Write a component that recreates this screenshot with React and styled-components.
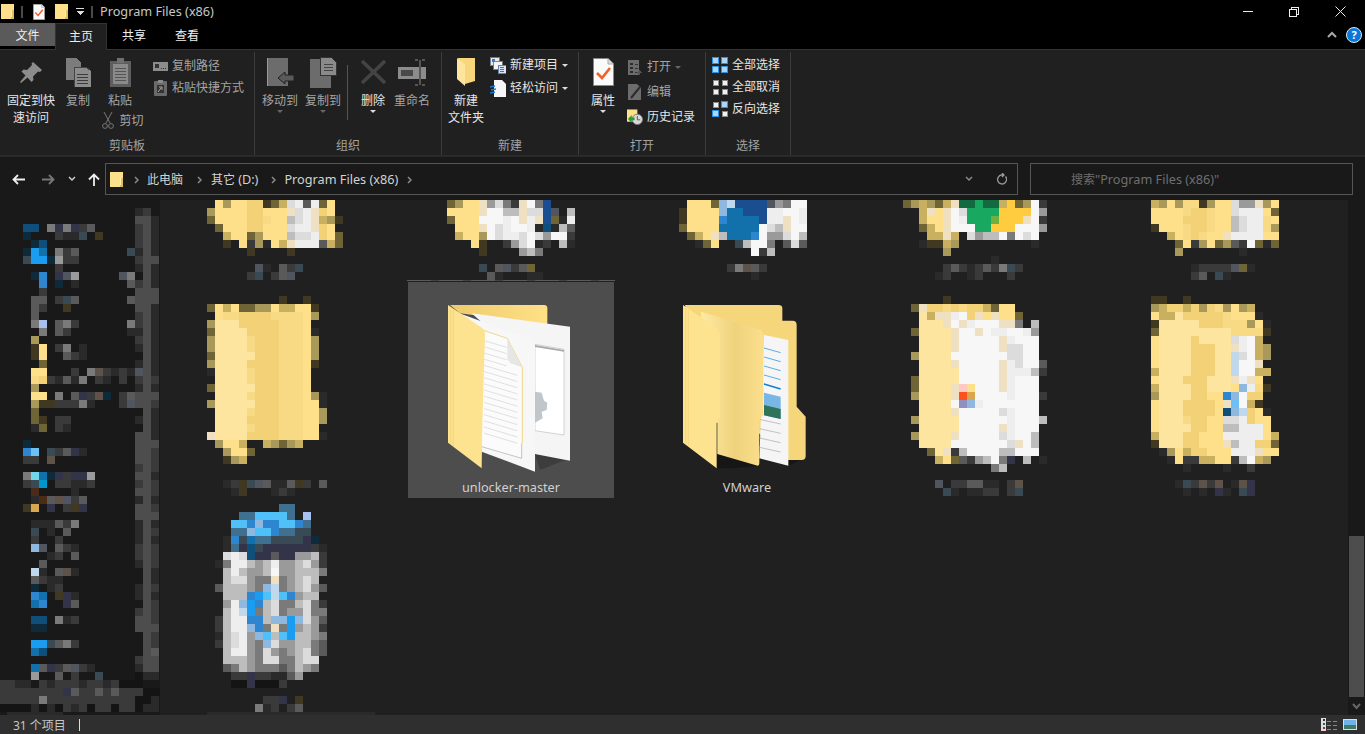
import styled, { createGlobalStyle } from "styled-components";

const GlobalStyle = createGlobalStyle`
    html, body{
        margin: 0;
        padding: 0;
        background: #000;
        overflow: hidden;
    }
    body{
        font-family: "Noto Sans", "Noto Sans CJK SC", sans-serif;
        font-size: 12px;
    }
`;

const Latin = styled.span`
    font-size: 12.7px;
`;

const Window = styled.div`
    width: 1365px;
    height: 734px;
    display: flex;
    flex-direction: column;
    overflow: hidden;
    background: #000;
    color: #ddd;
`;

/* title bar */
const TitleBar = styled.div`
    height: 23px;
    display: flex;
    align-items: center;
    flex-shrink: 0;
`;
const QuickSlot = styled.div`
    display: flex;
    align-items: center;
    margin-left: ${p => p.$left}px;
`;
const QuickSep = styled.div`
    width: 2px;
    height: 12px;
    background: #4a4a4a;
    margin-left: ${p => p.$left}px;
`;
const Title = styled.span`
    margin-left: 7px;
    color: #c8c8c8;
    line-height: 23px;
`;
const Controls = styled.div`
    margin-left: auto;
    padding-right: 2px;
    display: flex;
`;
const Control = styled.div`
    width: 46px;
    height: 22px;
    display: flex;
    align-items: center;
    justify-content: center;
`;

/* tabs */
const TabRow = styled.div`
    height: 26px;
    display: flex;
    flex-shrink: 0;
    position: relative;
    z-index: 1;
`;
const FileTab = styled.div`
    width: 55px;
    height: 23px;
    background: #5a5a5a;
    color: #eee;
    display: flex;
    align-items: center;
    justify-content: center;
`;
const Tab = styled.div`
    width: ${p => p.$w}px;
    height: ${p => p.$active ? 27 : 26}px;
    box-sizing: border-box;
    background: ${p => p.$active ? "#202020" : "transparent"};
    border: 1px solid ${p => p.$active ? "#333" : "transparent"};
    border-bottom: none;
    color: #eee;
    display: flex;
    align-items: center;
    justify-content: center;
    padding-bottom: 3px;
`;
const HelpArea = styled.div`
    margin-left: auto;
    padding: 0 3px 3px 0;
    display: flex;
    align-items: center;
    gap: 9px;
`;

/* ribbon */
const Ribbon = styled.div`
    height: 108px;
    box-sizing: border-box;
    flex-shrink: 0;
    background: #202020;
    border-top: 1px solid #333;
    border-bottom: 2px solid #2a2a2a;
    padding-top: 2px;
    display: flex;
`;
const Group = styled.div`
    width: ${p => p.$w}px;
    height: 103px;
    flex-shrink: 0;
    box-sizing: border-box;
    display: flex;
    flex-direction: column;
    border-right: 1px solid #3c3c3c;
`;
const GroupBody = styled.div`
    height: 85px;
    display: flex;
    padding-left: ${p => p.$pad || 0}px;
`;
const GroupLabel = styled.div`
    height: 18px;
    line-height: 18px;
    text-align: center;
    color: #a2a2a2;
`;
const LargeBtn = styled.div`
    width: ${p => p.$w}px;
    display: flex;
    flex-direction: column;
    align-items: center;
    flex-shrink: 0;
    color: ${p => p.$dim ? "#a4a4a4" : "#e6e6e6"};
    line-height: 17px;
    white-space: nowrap;
    text-align: center;
`;
const IconBox = styled.div`
    height: 40px;
    display: flex;
    align-items: center;
    justify-content: center;
`;
const Caret = styled.div`
    width: 0;
    height: 0;
    margin-top: 1px;
    border-left: 3px solid transparent;
    border-right: 3px solid transparent;
    border-top: 3px solid ${p => p.$dim ? "#666" : "#ddd"};
    margin-left: ${p => p.$left || 0}px;
`;
const CutRow = styled.div`
    display: flex;
    align-items: center;
    gap: 5px;
    margin-top: 3px;
    margin-left: 6px;
    color: #a8a8a8;
`;
const SmallCol = styled.div`
    display: flex;
    flex-direction: column;
    gap: ${p => p.$gap}px;
    padding-top: ${p => p.$top}px;
    margin-left: ${p => p.$left || 0}px;
`;
const SmallRow = styled.div`
    height: 18px;
    display: flex;
    align-items: center;
    gap: 4px;
    white-space: nowrap;
    color: ${p => p.$dim ? "#a4a4a4" : "#e6e6e6"};
    line-height: 18px;
`;
const SmallIcon = styled.div`
    width: 16px;
    height: 18px;
    display: flex;
    align-items: center;
    justify-content: center;
    flex-shrink: 0;
`;
const VSep = styled.div`
    width: 1px;
    height: 55px;
    margin: 13px 6px 0;
    background: #555;
    flex-shrink: 0;
`;

/* address bar */
const AddressRow = styled.div`
    height: 43px;
    flex-shrink: 0;
    background: #191919;
    display: flex;
    align-items: center;
    box-sizing: border-box;
    padding: 1px 12px 0 0;
`;
const NavBtns = styled.div`
    width: 105px;
    display: flex;
    align-items: center;
    flex-shrink: 0;
`;
const NavSlot = styled.div`
    margin-left: ${p => p.$left}px;
    display: flex;
`;
const AddressBox = styled.div`
    width: 913px;
    height: 32px;
    box-sizing: border-box;
    border: 1px solid #555;
    display: flex;
    align-items: center;
    padding-left: 4px;
    color: #d2d2d2;
`;
const Crumb = styled.span`
    margin-left: ${p => p.$left}px;
    white-space: nowrap;
`;
const BoxEnd = styled.div`
    margin-left: auto;
    display: flex;
    align-items: center;
    gap: 23px;
    padding-right: 10px;
`;
const SearchBox = styled.div`
    width: 323px;
    height: 32px;
    margin-left: 12px;
    box-sizing: border-box;
    border: 1px solid #555;
    padding-left: 40px;
    color: #6e6e6e;
    line-height: 30px;
`;

/* main */
const Main = styled.div`
    flex: 1;
    min-height: 0;
    display: flex;
    overflow: hidden;
`;
const NavPane = styled.div`
    width: 160px;
    flex-shrink: 0;
    background: #191919;
    overflow: hidden;
`;
const Content = styled.div`
    flex: 1;
    background: #202020;
    padding-left: 12px;
    display: grid;
    grid-template-columns: repeat(5, 206px);
    grid-template-rows: 82px 222px 1fr;
    column-gap: 30px;
    overflow: hidden;
`;
const Tile = styled.div`
    padding-top: ${p => p.$top || 0}px;
    min-width: 0;
`;
const SelectedTile = styled.div`
    height: 216px;
    box-sizing: border-box;
    background: ${p => p.$on ? "#4d4d4d" : "transparent"};
    padding-top: 23px;
    display: flex;
    flex-direction: column;
    position: relative;

    &::before{
        content: "";
        display: ${p => p.$on ? "block" : "none"};
        position: absolute;
        left: -1px;
        right: -1px;
        top: -2px;
        height: 1px;
        background: repeating-linear-gradient(90deg, #5a5a5a 0 24px, #444 24px 32px);
    }
`;
const FolderSlot = styled.div`
    height: 167px;
    margin-left: ${p => p.$left}px;
`;
const TileName = styled.div`
    margin-top: 7px;
    line-height: 16px;
    text-align: center;
    color: #d0d0d0;
`;
const ScrollBar = styled.div`
    width: 17px;
    flex-shrink: 0;
    background: #191919;
    box-sizing: border-box;
    padding: 336px 1px 0;
    display: flex;
    flex-direction: column;
    align-items: center;
`;
const ScrollThumb = styled.div`
    width: 15px;
    height: 161px;
    background: #4d4d4d;
`;
const ScrollDown = styled.div`
    margin-top: 6px;
    display: flex;
`;

/* status bar */
const StatusBar = styled.div`
    height: 19px;
    flex-shrink: 0;
    background: #2f2f2f;
    display: flex;
    align-items: center;
    padding-left: 13px;
    color: #c6c6c6;
`;
const StatusSep = styled.div`
    width: 1px;
    height: 12px;
    background: #ddd;
    margin-left: 13px;
`;
const ViewBtns = styled.div`
    margin-left: auto;
    padding-right: 8px;
    display: flex;
    align-items: center;
    gap: 6px;
`;

const MosaicSvg = styled.svg`
    display: block;
    margin-left: ${p => p.$x || 0}px;
    flex-shrink: 0;
`;

// colours of the pixelated (censored) blocks
const palette = {
    j: "#ffe08a", J: "#fde59f", w: "#f3d277", W: "#f9da84", k: "#a8985a", K: "#c8b060",
    l: "#6f6435", m: "#403820", n: "#4d4d4d", e: "#5a5a5a", f: "#3a3a3a", g: "#2a2a2a",
    h: "#7a7a7a", z: "#9a9a9a", y: "#bdbdbd", Y: "#dcdcdc", X: "#eeeeee", x: "#f7f7f7",
    T: "#eee0c0", A: "#1a4e90", a: "#0f4f7a", B: "#1270aa", b: "#1a9cf0", c: "#0f2a3a",
    d: "#2f86d0", D: "#6cc0f4", i: "#a8c0f0", q: "#70d8e8", r: "#0098c8", u: "#8fb8e0",
    v: "#c0d8ec", V: "#4fc0f8", N: "#3f7090", E: "#146a40", G: "#18a860", H: "#70b040",
    O: "#ffcc40", R: "#ff5020", S: "#ffc8c0", I: "#9090c0", s: "#4a2a18", t: "#d8a850",
    o: "#5f5248", p: "#3a4a55", P: "#505560", F: "#33334a", Q: "#141414",
};

function Mosaic({ rows, x }){
    const cols = Math.max(...rows.map(r => r.length));
    return (
        <MosaicSvg $x={x} width={cols * 8} height={rows.length * 8} shapeRendering="crispEdges">
            {rows.map((row, ry) => row.split("").map((ch, rx) => (
                palette[ch] ? <rect key={rx} x={rx * 8} y={ry * 8} width="8" height="8" fill={palette[ch]} /> : null
            )))}
        </MosaicSvg>
    );
}

const navRows = [
    "...", "..............gf.", "..............nng", "aa.hFhFfe.....fng", "c...fggp.m....fng",
    ".ca...........fng", "cbB.hfe......pgng", "pbbczff.......fnn", "....f.........gng",
    ".cd.FPz.....Ph.ng", "..d.c.g......efng", "..f...........nnn", ".ee.fpe......ennn",
    ".ef..m........nng", ".e............fng", ".hi.ehf......hfng", "..h.ef.......ggng",
    ".k............fng", ".mj.fh.g......gng", ".mj..efg.......ng", "..l...........gng",
    ".jj...f.hofgfgPng", ".Wwfgegh.fg.f.fnf", ".k............gng", ".jj.h.eFfoc.fennn",
    ".kmmfffhg...fPnnf", ".l.............ng", ".lm.ff........gng", ".gl.fg.........ng",
    "..............nng", "c.............nnn", "dD.pfeFg......nnf", "ff.o..........nnf",
    "..............fnf", "hqBcFfFFz.....nng", "fpr.ffggf.....fnf", ".s....g.......nnf",
    ".gseoPfe......gng", "mt.F.fmF......nnf", "..............nnn", ".gggefh.......gng",
    ".p.g.e........gnf", ".f..f.........gng", ".uP.efg.......fnf", "...gf.e.......fnf",
    "..e...........gnf", ".vg.eog........ng", ".efgg..........ng", ".c.gf.........gnf",
    ".dB.mFg.......gng", ".Bd..Fe........nf", "..............fnf", ".aa.hgf.......nnf",
    ".cc...........nnn", "...............nf", ".bbpehf........nf", ".Ba............ne",
    "..............fnn", ".BeFfePfg.....gnn", ".z..e.f..p....Qgg",
].map(r => "..." + r);
navRows.push(
    "ffgg.fgfffgffgfQQQ",
    "ffffffffFeffefefffQQQ",
    "fffffhfffffffffffQQg",
    "QQQQgQgQfgfQffQffQgg",
    ".ggggggg"
);

const folderA = [
    ".jkjjwwmlKYXeXlj.", "kjjjjwwjjjTYXTwj.", "ljjjjwwWjjyYXTKkm", ".ljjjwwjjjYXXTwj.",
    "..KjjlkjjjyYYXwjl", "..m.jfkgjKTXXXeKl", ".....m....m......", "", "......Pg.efp.....", ".....fp.feP......",
];
const folderB = [
    "lkjjTzYhfTxhA...", "jjjjTxxyyTYYAP.y", "ljjjxxxXxTXTAlgX", ".jjjTxYXxxXgagye",
    ".KjjkxYXXYxYzxxf", "...jm..fzYxgf.yg", "....m....zyh....", "", "....p.ePfel.....", ".....eg...gg....",
];
const folderC = [
    ".jjjluvAAAAPzhxx", "mjjjjuBBAAAXXxxX", "mjjjjdBBBBAXXTxX", "ljjjjBBBBBxYyTxx",
    ".lKjTyBBBdxzzYxy", "..glj..pyxxh.eYe", ".........xfy....", "", "......fhoef.....", ".........g......",
];
const folderD = [
    "lkKklKTEEGEEKOlkxf", "..KTjTxYGGGGOOOOxz", "..KjjTxXGGGHOOOTxf", "..lKjTxxxGGOOOxxxz",
    "...KKTK.YzyyxhxYx.", "..gmmKk.........g.", ".....k............", "...........g......",
    ".....fefgfefhpf...", "....gf..gf...f....",
];
const folderE = [
    "KkjkWWmkjjYzzTkj", "jjjjWwwWjjYXXXjl", "jjjjwwwWjjyYXXWj", "mjjjWwwWjjyYXXWk",
    "..KjWwWjjTXXXXjj", "...ljfkjlkefxlgl", "...k.......g....", "", ".....gffffPlg...", ".....fe.pg......",
];
const folderF = [
    ".........m..m", "ljKjllkkjKKjjm", ".jWWwwwwWWWWjk", "kJJJwwwwwWWWj", "lJJJJwwwwWWWjg",
    "kJJJJWwwwWWWjk", "kJJJJWwwwWWWjk", "lJJJJJwwwWWWjk", "kJJJJwwwwWWWjm", "gJJJJWwwwWWWj",
    ".JJJJWwwwWWWj", "lJJJJJwwwWWWj", ".JJJJWwwwWWWjkg", "kJJJJJwwwWWWjjg", ".JJJJWwwwWWWjjk",
    ".JJJJwwwwWWWjjk", ".JJJJWwwwWWWjj", "TJJJJwwwwWWWjjg", ".kjjK..KklkK", "..kjjl", "..mkK",
    "", "", "..gfmpPeggemf.e", "...gm...gfg",
];
const folderG = [
    "....m", "lTwwWwWwwKljj", ".JKTTXxwTjTjjl", ".JJJTxTXxxxTTh.y", "lJJJJTxxTxXXxxXz",
    ".JJJJTxxxxxTXxxx", ".JJJJTxxxxxTYYxx", "kJJJJxxxxxxxYYxx", ".JJJJTxxxxxTXYxxe",
    ".JJJJJxxxxxTXXXyf", "lJJJJJxxxxxTXxxx", "lJJJJTSjxxxTXxxx", "kJJJJTRtxxxxXxxxf",
    ".JJJJxIuXxxxxxxx", ".JJJJTxxxxxYXxxx", "kJJJJJxxxxxxXxxxy", ".JJJJJxxxxxTXxxx",
    "kJJJJTxxxxxYXxxy", ".JJJJxxxxxxxYTxy", "..lJTfyxxxxyyxxx", "...KjlefzyxhF.y.g",
    "..........hy", "", "...P.ffeegg.fo", "....pg.ggff.fp",
];
const folderH = [
    "mm..m", "kKwwKwkwWkjkK", "jKKJwwwwwWjjjg", "mJJJJJwwwWWWkjg", "lJJJJJJJJJWWWWm",
    "jJJJJwJJJJYXxK", "jJJJJwwwJJTXxKk", "jJJJJwwwJJvYxKk", "jJJJJwwwJJvxxT.", "KJJJJwwwJJvxxKK",
    "jJJJwwwJJJTXTj.", "KJJJJwwJJJjuXWm", "kJJJJwwjjduxww.", "jJJJwwwwjTDxKm.", "jJJJwwwwjauvwjg",
    "jJJJWwwjjYYXwjj", "jJJJJwwjjyyXXXj", "KJJJwwjjjXXXXXjK", "mJJJwwjjjTyXXwwl", ".gkjKwwjjjXXXTjj",
    "..gjffKKjjfyxKk", "....g....g..f", "", "...gpfofo.goF", "....g.g.Fg.pF",
];
const binRows = [
    ".........NN", "....NNVVVVN.i", "...VVduddVVdN", "...NNuVVdNNpp", "..gdpBNNppppFc",
    "..gNFapFFFFFFfg", "..YXYaFFeFFzzyf", ".ghXXyzyXzzyYzf", "..yXyzzyxzzyyyh", "..yYYzhhThzyYy",
    ".eyyyzhuvhzyYze", "..yyydbVvVdzyy", "..zXubdyYhhyYhf", "..yXvbhyYhzzYhh", ".fyXXddyuubuYze",
    ".fyXXudhThbzyzf", ".gyYXzuVyVbyyzh", ".fyYXzhuYzzyyhe", "..yXXzhYzhzyYhe", "..yyyzhYYhhyYY",
    "..ehyzhhhehyzh", "...ffFffggez", "...QQFQQQf", "", ".......ffF.m", "......hgf.fe", "ggggggggggggggggggggg",
];

/* icons */
function FolderIcon({ w = 13, h = 15 }){
    return (
        <svg width={w} height={h} viewBox="0 0 13 15" shapeRendering="crispEdges">
            <rect width="13" height="15" fill="#ffe08a" />
            <rect x="10" y="6" width="3" height="9" fill="#e2bd5f" />
            <rect x="10" y="6" width="1" height="7" fill="#fff0b8" />
        </svg>
    );
}
function PageCheck({ w = 12, h = 16 }){
    return (
        <svg width={w} height={h} viewBox="0 0 21 28">
            <path d="M.5.5H15L20.5 6V27.5H.5Z" fill="#fafafa" stroke="#888" />
            <path d="M15 .5V6H20.5" fill="#ddd" stroke="#aaa" />
            <path d="M4 15l5 5 8-10" fill="none" stroke="#f0602a" strokeWidth="2.6" />
        </svg>
    );
}
const QuickDown = () => (
    <svg width="8" height="8" viewBox="0 0 8 8" shapeRendering="crispEdges">
        <rect y="0" width="8" height="1" fill="#ddd" />
        <path d="M0 3h8L4 7Z" fill="#ddd" />
    </svg>
);
const Pin = () => (
    <svg width="22" height="21" viewBox="0 0 22 21">
        <path d="M13 0l9 8-2 2-2-.5-5 5 .5 3.5-2 2-4-4.5L1 21l-1-1 5.500-6.500L1.500 9.500l2-2 3.500.5 5-5L11.500 1.500Z" fill="#8c8c8c" />
    </svg>
);
const Copy = () => (
    <svg width="25" height="29" viewBox="0 0 25 29" shapeRendering="crispEdges">
        <path d="M0 0H10L15 5V22H0Z" fill="#7c7c7c" />
        <path d="M8 9H20L25 13V29H8Z" fill="#8c8c8c" stroke="#444" />
        <path d="M11 16H22M11 19H22M11 22H22M11 25H22" stroke="#3a3a3a" />
    </svg>
);
const Paste = () => (
    <svg width="21" height="29" viewBox="0 0 21 29" shapeRendering="crispEdges">
        <rect y="3" width="21" height="26" fill="#5e5e5e" />
        <rect x="3" y="6" width="15" height="20" fill="#8a8a8a" />
        <path d="M5 10H16M5 13H16M5 16H16M5 19H16M5 22H16" stroke="#555" />
        <rect x="7" y="0" width="7" height="5" fill="#707070" />
    </svg>
);
const Scissors = () => (
    <svg width="12" height="17" viewBox="0 0 12 17" fill="none" stroke="#777">
        <path d="M2 0l6 11M10 0L4 11" />
        <circle cx="3" cy="14" r="2.400" />
        <circle cx="9" cy="14" r="2.400" />
    </svg>
);
const PathIcon = () => (
    <svg width="15" height="9" viewBox="0 0 15 9" shapeRendering="crispEdges">
        <rect width="15" height="9" fill="#8c8c8c" />
        <path d="M2 2l1 4 1-4 1 4 1-4M8 6h1M10 6h1M12 6h1" stroke="#333" fill="none" />
    </svg>
);
const ShortcutIcon = () => (
    <svg width="13" height="16" viewBox="0 0 13 16">
        <rect y="1" width="13" height="15" rx="1" fill="#6a6a6a" />
        <rect x="4" width="5" height="3" fill="#8a8a8a" />
        <rect x="3" y="5" width="7" height="8" fill="#333" />
        <path d="M4 12l3-4M5 7h3v3" stroke="#aaa" fill="none" />
    </svg>
);
const MoveTo = () => (
    <svg width="27" height="29" viewBox="0 0 27 29" shapeRendering="crispEdges">
        <rect width="21" height="28" fill="#6c6c6c" />
        <rect width="1" height="28" fill="#999" />
        <path d="M11 20l7-6v3h9v6h-9v3Z" fill="#5a5a5a" stroke="#202020" shapeRendering="auto" />
    </svg>
);
const CopyTo = () => (
    <svg width="27" height="31" viewBox="0 0 27 31" shapeRendering="crispEdges">
        <rect y="2" width="21" height="29" fill="#6c6c6c" />
        <path d="M10 0H21L26 5V18H10Z" fill="#8a8a8a" stroke="#333" />
        <path d="M14 7H23M14 10H23M14 13H23" stroke="#444" />
    </svg>
);
const Delete = () => (
    <svg width="25" height="24" viewBox="0 0 25 24">
        <path d="M1 1l23 22M24 1L1 23" stroke="#444" strokeWidth="3.500" />
    </svg>
);
const Rename = () => (
    <svg width="29" height="27" viewBox="0 0 29 27" shapeRendering="crispEdges">
        <rect y="8" width="28" height="12" fill="#8c8c8c" />
        <rect x="3" y="11" width="12" height="6" fill="#4a4a4a" />
        <path d="M17 1h3M24 1h3M22 1V26M17 26h3M24 26h3" stroke="#555" strokeWidth="2" fill="none" />
    </svg>
);
const NewFolder = () => (
    <svg width="19" height="28" viewBox="0 0 19 28">
        <path d="M1 0H18V23L8 26Z" fill="#f8d77c" />
        <path d="M0 0L8 6V28L0 21Z" fill="#fde59f" />
    </svg>
);
const NewItem = () => (
    <svg width="17" height="17" viewBox="0 0 17 17" shapeRendering="crispEdges">
        <rect width="10" height="9" fill="#e8e8e8" stroke="#778" />
        <rect x="2" y="2" width="3" height="3" fill="#3a7bc8" />
        <rect x="4" y="4" width="9" height="9" fill="#f4f4f4" stroke="#778" />
        <rect x="9" y="8" width="8" height="9" fill="#d8e4f4" stroke="#5a7ab0" />
        <path d="M11 11h4M11 13h4M11 15h4" stroke="#3a6ab0" />
    </svg>
);
const EasyAccess = () => (
    <svg width="16" height="17" viewBox="0 0 16 17">
        <path d="M4 0H12L16 4V17H4Z" fill="#f6f6f6" />
        <path d="M0 7l5-1M1 10l5-1M0 13l5-1" stroke="#1878d8" strokeWidth="1.400" />
    </svg>
);
const OpenIcon = () => (
    <svg width="14" height="15" viewBox="0 0 14 15" shapeRendering="crispEdges">
        <rect width="11" height="15" fill="#6c6c6c" />
        <path d="M2 3h3v2H2ZM2 7h3v2H2ZM2 11h3v2H2Z" fill="#2c2c2c" />
        <path d="M7 4h3M7 8h3M7 12h3" stroke="#333" />
        <path d="M11 10l3 3h-2v2h-2v-2H8Z" fill="#555" />
    </svg>
);
const EditIcon = () => (
    <svg width="14" height="16" viewBox="0 0 14 16">
        <path d="M0 0H9L13 4V16H0Z" fill="#6c6c6c" />
        <path d="M3 14L12 3" stroke="#2c2c2c" strokeWidth="2" />
    </svg>
);
const HistoryIcon = () => (
    <svg width="17" height="16" viewBox="0 0 17 16">
        <rect width="11" height="13" fill="#ffe08a" />
        <circle cx="11" cy="10.500" r="5.500" fill="#d8d8d8" stroke="#777" />
        <path d="M11 7v4h3" stroke="#555" fill="none" />
        <path d="M1 10l4-4v2.500h3v3H5V14Z" fill="#2c9a2c" />
    </svg>
);
const SelectGrid = ({ pattern }) => (
    <svg width="16" height="16" viewBox="0 0 16 16" shapeRendering="crispEdges">
        {pattern.map((c, i) => {
            const px = i % 2 ? 9 : 0;
            const py = i > 1 ? 9 : 0;
            return c
                ? <g key={i}><rect x={px} y={py} width="7" height="7" fill="#2f8fe0" /><rect x={px + 1} y={py + 1} width="5" height="5" fill="#a9d6fb" /></g>
                : <g key={i}><rect x={px + 1} y={py + 1} width="6" height="6" fill="#8a8a8a" /><rect x={px + 2} y={py + 2} width="4" height="4" fill="#f2f2f2" /></g>;
        })}
    </svg>
);
const Chevron = ({ color = "#8a8a8a" }) => (
    <svg width="5" height="8" viewBox="0 0 5 8"><path d="M1 1l3 3-3 3" fill="none" stroke={color} strokeWidth="1.500" /></svg>
);
const ArrowLeft = ({ color }) => (
    <svg width="13" height="11" viewBox="0 0 13 11"><path d="M13 5.500H2M6 1L1.500 5.500 6 10" fill="none" stroke={color} strokeWidth="1.800" /></svg>
);
const ArrowRight = ({ color }) => (
    <svg width="13" height="11" viewBox="0 0 13 11"><path d="M0 5.500H11M7 1l4.500 4.500L7 10" fill="none" stroke={color} strokeWidth="1.800" /></svg>
);
const ArrowUp = () => (
    <svg width="12" height="13" viewBox="0 0 12 13"><path d="M6 13V2M1 6.500L6 1.500l5 5" fill="none" stroke="#eee" strokeWidth="1.800" /></svg>
);
const SmallDown = ({ color = "#ccc" }) => (
    <svg width="8" height="6" viewBox="0 0 8 6"><path d="M1 1l3 3 3-3" fill="none" stroke={color} strokeWidth="1.500" /></svg>
);
const Refresh = () => (
    <svg width="11" height="12" viewBox="0 0 11 12"><path d="M9.500 3.500A4.500 4.500 0 1 1 5.500 2H8M6 0l2 2-2 2" fill="none" stroke="#999" strokeWidth="1.300" /></svg>
);
const Help = () => (
    <svg width="16" height="16" viewBox="0 0 16 16">
        <circle cx="8" cy="8" r="7.500" fill="#0a78d8" stroke="#d8e8f8" />
        <text x="8" y="12" textAnchor="middle" fontSize="11" fontWeight="700" fill="#fff" fontFamily="Noto Sans">?</text>
    </svg>
);
const ListView = () => (
    <svg width="16" height="13" viewBox="0 0 16 13" shapeRendering="crispEdges">
        <rect width="5" height="13" fill="#ddd" />
        <rect x="1.500" y="1" width="2" height="2" fill="#333" />
        <rect x="1.500" y="5" width="2" height="2" fill="#357" />
        <rect x="1.500" y="9" width="2" height="2" fill="#b22" />
        <path d="M6 3h4M12 3h4M6 7h4M12 7h4M6 11h4M12 11h4" stroke="#888" />
    </svg>
);
const ThumbView = () => (
    <svg width="14" height="11" viewBox="0 0 14 11" shapeRendering="crispEdges">
        <rect width="14" height="11" fill="#ddd" />
        <rect x="1" y="1" width="12" height="9" fill="#6fb4e8" />
        <rect x="1" y="6" width="12" height="4" fill="#3f7a6a" />
    </svg>
);

// big open folder with documents (zoom coordinates as viewBox)
const UnlockerFolder = () => (
    <svg width="123" height="167" viewBox="141 105 369 501">
        <defs>
            <linearGradient id="ub" x1="0" x2="1" y1="0" y2="0">
                <stop offset="0" stopColor="#eecb6c" />
                <stop offset="1" stopColor="#ffe086" />
            </linearGradient>
        </defs>
        <path d="M405 552L510 572 560 545 420 600Z" fill="#000" opacity=".2" />
        <path d="M150 105H432Q442 105 442 115V165L180 130Z" fill="url(#ub)" />
        <path d="M215 130L510 170V572L405 552V300Z" fill="#f5f5f6" />
        <path d="M405 223L492 238V495L405 482Z" fill="#fff" stroke="#aaa" strokeWidth="1.500" />
        <path d="M405 225L492 240V245L405 231Z" fill="#aaa" />
        <path d="M405 365L425 368 432 392 442 398 440 420 425 425 428 445 405 458Z" fill="#c0c6ca" />
        <path d="M178 130L405 212V605L245 545Z" fill="#f7f7f8" />
        <path d="M235 178L322 205V270L365 292V565L245 528Z" fill="#fbfbfb" />
        <path d="M235 176L322 205 367 292V520" fill="none" stroke="#f3d888" strokeWidth="3" />
        <path d="M365 520V565L245 530" fill="none" stroke="#aaa" strokeWidth="2" />
        <path d="M322 205L365 292 332 280 322 268Z" fill="#e6e6e6" />
        <g stroke="#c4c4c4" strokeWidth="1.500">
            {Array.from({ length: 16 }, (_, i) => (
                <path key={i} d={`M252 ${212 + i * 18.500}L${i < 4 ? 320 : 352} ${(i < 4 ? 232 : 242) + i * 18.500}`} />
            ))}
        </g>
        <path d="M144 105L243 172Q255 180 255 195L247 458 245 595 144 518Z" fill="#fde28f" />
        <path d="M152 115V522M160 120V528" stroke="#f2cf75" strokeWidth="2" />
    </svg>
);

const VmwareFolder = () => (
    <svg width="123" height="164" viewBox="849 105 369 492">
        <defs>
            <linearGradient id="vm" x1="0" x2="1" y1="0" y2="0">
                <stop offset="0" stopColor="#fdeaa5" />
                <stop offset=".55" stopColor="#efd27c" />
                <stop offset="1" stopColor="#fbdf8c" />
            </linearGradient>
        </defs>
        <path d="M1165 570L1217 565 1260 545 1165 587ZM950 552L1075 588 1000 595 950 595Z" fill="#000" opacity=".3" />
        <path d="M855 105H1135Q1147 105 1147 115V152H1178Q1190 152 1190 165V410L1217 440V558Q1217 570 1205 570L1150 570 903 300Z" fill="#f6d67a" />
        <path d="M1092 195L1165 210V587L1078 565Z" fill="#f5f5f5" />
        <g stroke="#3aa0e0" strokeWidth="2.500">
            <path d="M1092 234L1142 248M1092 261L1142 275M1092 288L1142 302M1092 315L1142 329" />
        </g>
        <path d="M1092 342L1142 357" stroke="#0a80d8" strokeWidth="4" />
        <path d="M1092 368L1142 380V447L1092 436Z" fill="#78b6e6" />
        <path d="M1092 405L1142 417V447L1092 436Z" fill="#2f7358" />
        <g stroke="#a8a8a8" strokeWidth="2">
            <path d="M1078 448L1142 462M1078 476L1142 490M1078 504L1142 518M1078 532L1142 546" />
        </g>
        <path d="M903 125L1078 178Q1090 183 1090 197V435L1078 450V578Q1078 590 1068 586L952 552V460L903 300Z" fill="url(#vm)" />
        <path d="M849 105L948 172Q960 182 960 197V440L950 460V595L849 518Z" fill="#fde28f" />
        <path d="M857 115V522M865 120V528" stroke="#f2cf75" strokeWidth="2" />
    </svg>
);

export default function App(){
    return (
        <Window>
            <GlobalStyle />
            <TitleBar>
                <QuickSlot $left={1}><FolderIcon /></QuickSlot>
                <QuickSep $left={7} />
                <QuickSlot $left={10}><PageCheck /></QuickSlot>
                <QuickSlot $left={10}><FolderIcon /></QuickSlot>
                <QuickSlot $left={8}><QuickDown /></QuickSlot>
                <QuickSep $left={7} />
                <Title><Latin>Program Files (x86)</Latin></Title>
                <Controls>
                    <Control>
                        <svg width="10" height="1" shapeRendering="crispEdges"><rect width="10" height="1" fill="#eee" /></svg>
                    </Control>
                    <Control>
                        <svg width="10" height="10" viewBox="0 0 10 10" shapeRendering="crispEdges">
                            <path d="M2.500 2.500V.5H9.500V7.500H7.500M.5 2.500H7.500V9.500H.5Z" fill="none" stroke="#eee" />
                        </svg>
                    </Control>
                    <Control>
                        <svg width="11" height="11" viewBox="0 0 11 11"><path d="M.5.5l10 10M10.500.5l-10 10" stroke="#eee" /></svg>
                    </Control>
                </Controls>
            </TitleBar>

            <TabRow>
                <FileTab>文件</FileTab>
                <Tab $w={52} $active>主页</Tab>
                <Tab $w={54}>共享</Tab>
                <Tab $w={52}>查看</Tab>
                <HelpArea>
                    <svg width="10" height="7" viewBox="0 0 10 7"><path d="M1 6l4-4 4 4" fill="none" stroke="#aaa" strokeWidth="2" /></svg>
                    <Help />
                </HelpArea>
            </TabRow>

            <Ribbon>
                <Group $w={255}>
                    <GroupBody>
                        <LargeBtn $w={62}>
                            <IconBox><Pin /></IconBox>
                            固定到快<br />速访问
                        </LargeBtn>
                        <LargeBtn $w={32} $dim>
                            <IconBox><Copy /></IconBox>
                            复制
                        </LargeBtn>
                        <LargeBtn $w={52} $dim>
                            <IconBox><Paste /></IconBox>
                            粘贴
                            <CutRow><Scissors />剪切</CutRow>
                        </LargeBtn>
                        <SmallCol $top={5} $gap={4} $left={6}>
                            <SmallRow $dim><SmallIcon><PathIcon /></SmallIcon>复制路径</SmallRow>
                            <SmallRow $dim><SmallIcon><ShortcutIcon /></SmallIcon>粘贴快捷方式</SmallRow>
                        </SmallCol>
                    </GroupBody>
                    <GroupLabel>剪贴板</GroupLabel>
                </Group>
                <Group $w={187}>
                    <GroupBody>
                        <LargeBtn $w={50} $dim>
                            <IconBox><MoveTo /></IconBox>
                            移动到
                            <Caret $dim />
                        </LargeBtn>
                        <LargeBtn $w={36} $dim>
                            <IconBox><CopyTo /></IconBox>
                            复制到
                            <Caret $dim />
                        </LargeBtn>
                        <VSep />
                        <LargeBtn $w={38}>
                            <IconBox><Delete /></IconBox>
                            删除
                            <Caret />
                        </LargeBtn>
                        <LargeBtn $w={40} $dim>
                            <IconBox><Rename /></IconBox>
                            重命名
                        </LargeBtn>
                    </GroupBody>
                    <GroupLabel>组织</GroupLabel>
                </Group>
                <Group $w={137}>
                    <GroupBody>
                        <LargeBtn $w={48}>
                            <IconBox><NewFolder /></IconBox>
                            新建<br />文件夹
                        </LargeBtn>
                        <SmallCol $top={4} $gap={5}>
                            <SmallRow><SmallIcon><NewItem /></SmallIcon>新建项目<Caret /></SmallRow>
                            <SmallRow><SmallIcon><EasyAccess /></SmallIcon>轻松访问<Caret /></SmallRow>
                        </SmallCol>
                    </GroupBody>
                    <GroupLabel>新建</GroupLabel>
                </Group>
                <Group $w={127}>
                    <GroupBody>
                        <LargeBtn $w={48}>
                            <IconBox><PageCheck w={21} h={28} /></IconBox>
                            属性
                            <Caret />
                        </LargeBtn>
                        <SmallCol $top={6} $gap={7}>
                            <SmallRow $dim><SmallIcon><OpenIcon /></SmallIcon>打开<Caret $dim /></SmallRow>
                            <SmallRow $dim><SmallIcon><EditIcon /></SmallIcon>编辑</SmallRow>
                            <SmallRow><SmallIcon><HistoryIcon /></SmallIcon>历史记录</SmallRow>
                        </SmallCol>
                    </GroupBody>
                    <GroupLabel>打开</GroupLabel>
                </Group>
                <Group $w={85}>
                    <GroupBody $pad={6}>
                        <SmallCol $top={4} $gap={4}>
                            <SmallRow><SmallIcon><SelectGrid pattern={[1, 1, 1, 1]} /></SmallIcon>全部选择</SmallRow>
                            <SmallRow><SmallIcon><SelectGrid pattern={[0, 0, 0, 0]} /></SmallIcon>全部取消</SmallRow>
                            <SmallRow><SmallIcon><SelectGrid pattern={[0, 1, 1, 0]} /></SmallIcon>反向选择</SmallRow>
                        </SmallCol>
                    </GroupBody>
                    <GroupLabel>选择</GroupLabel>
                </Group>
            </Ribbon>

            <AddressRow>
                <NavBtns>
                    <NavSlot $left={12}><ArrowLeft color="#eee" /></NavSlot>
                    <NavSlot $left={17}><ArrowRight color="#777" /></NavSlot>
                    <NavSlot $left={13}><SmallDown /></NavSlot>
                    <NavSlot $left={12}><ArrowUp /></NavSlot>
                </NavBtns>
                <AddressBox>
                    <FolderIcon w={13} h={16} />
                    <Crumb $left={11}><Chevron /></Crumb>
                    <Crumb $left={8}>此电脑</Crumb>
                    <Crumb $left={14}><Chevron /></Crumb>
                    <Crumb $left={9}>其它 <Latin>(D:)</Latin></Crumb>
                    <Crumb $left={13}><Chevron /></Crumb>
                    <Crumb $left={8}><Latin>Program Files (x86)</Latin></Crumb>
                    <Crumb $left={9}><Chevron /></Crumb>
                    <BoxEnd>
                        <SmallDown color="#8a8a8a" />
                        <Refresh />
                    </BoxEnd>
                </AddressBox>
                <SearchBox>搜索<Latin>"Program Files (x86)"</Latin></SearchBox>
            </AddressRow>

            <Main>
                <NavPane>
                    <Mosaic rows={navRows} x={-1} />
                </NavPane>
                <Content>
                    <Tile><Mosaic rows={folderA} x={35} /></Tile>
                    <Tile><Mosaic rows={folderB} x={39} /></Tile>
                    <Tile><Mosaic rows={folderC} x={35} /></Tile>
                    <Tile><Mosaic rows={folderD} x={23} /></Tile>
                    <Tile><Mosaic rows={folderE} x={35} /></Tile>

                    <Tile $top={14}><Mosaic rows={folderF} x={35} /></Tile>
                    <SelectedTile $on>
                        <FolderSlot $left={39}><UnlockerFolder /></FolderSlot>
                        <TileName><Latin>unlocker-master</Latin></TileName>
                    </SelectedTile>
                    <SelectedTile>
                        <FolderSlot $left={39}><VmwareFolder /></FolderSlot>
                        <TileName><Latin>VMware</Latin></TileName>
                    </SelectedTile>
                    <Tile $top={14}><Mosaic rows={folderG} x={31} /></Tile>
                    <Tile $top={14}><Mosaic rows={folderH} x={35} /></Tile>

                    <Tile><Mosaic rows={binRows} x={35} /></Tile>
                </Content>
                <ScrollBar>
                    <ScrollThumb />
                    <ScrollDown>
                        <svg width="9" height="7" viewBox="0 0 9 7"><path d="M1 1l3.500 4L8 1" fill="none" stroke="#666" strokeWidth="2" /></svg>
                    </ScrollDown>
                </ScrollBar>
            </Main>

            <StatusBar>
                31 个项目
                <StatusSep />
                <ViewBtns>
                    <ListView />
                    <ThumbView />
                </ViewBtns>
            </StatusBar>
        </Window>
    );
}
